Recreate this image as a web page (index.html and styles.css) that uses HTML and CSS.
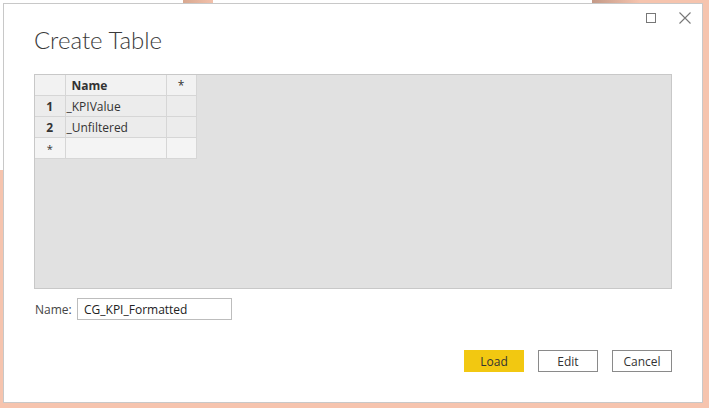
FILE: index.html
```html
<!DOCTYPE html>
<html lang="en">
  <head>
    <meta charset="UTF-8" />
    <title>Create Table</title>
    <link rel="stylesheet" href="styles.css">
  </head>
  <body>
    <div class="dialog">
      <div class="window-buttons">
        <svg width="11" height="11" viewBox="0 0 11 11"><rect x="0.5" y="0.5" width="9" height="9" fill="none" stroke="#777" stroke-width="1"/></svg>
        <svg width="12" height="12" viewBox="0 0 12 12"><path d="M0.5 0.5 L11.5 11.5 M11.5 0.5 L0.5 11.5" stroke="#777" stroke-width="1.1" fill="none"/></svg>
      </div>
      <h1 class="title">Create Table</h1>

      <div class="grid-area">
        <table class="grid">
          <colgroup>
            <col class="c-row" />
            <col class="c-name" />
            <col class="c-add" />
          </colgroup>
          <tr class="head">
            <td class="rowhead"></td>
            <td class="col-name">Name</td>
            <td class="col-add">*</td>
          </tr>
          <tr>
            <td class="rowhead">1</td>
            <td>_KPIValue</td>
            <td></td>
          </tr>
          <tr>
            <td class="rowhead">2</td>
            <td>_Unfiltered</td>
            <td></td>
          </tr>
          <tr class="new-row">
            <td class="rowhead star">*</td>
            <td></td>
            <td></td>
          </tr>
        </table>
      </div>

      <div class="name-row">
        <label for="tname">Name:</label>
        <input id="tname" type="text" value="CG_KPI_Formatted" />
      </div>

      <div class="actions">
        <button class="btn primary">Load</button>
        <button class="btn">Edit</button>
        <button class="btn">Cancel</button>
      </div>
    </div>
  </body>
</html>
```

FILE: styles.css
```css
html, body {
  height: 100%;
}

body {
  margin: 0;
  padding: 3px;
  box-sizing: border-box;
  font-family: "Segoe UI", "Open Sans", "Noto Sans", sans-serif;
  background-color: #f6c4ae;
  /* bits of the window behind the dialog */
  background-image:
    linear-gradient(to right, #fff 0, #fff 183px, #d8a890 183px, #f2c0aa 213px, #fff 213px, #fff 592px, #c49a88 592px, #f6c4ae 640px),
    linear-gradient(#fff, #fff);
  background-size: 100% 3px, 3px 170px;
  background-repeat: no-repeat;
  background-position: 0 0, 0 0;
}

.dialog {
  height: 400px;
  width: 700px;
  box-sizing: border-box;
  background: #fff;
  border: 1px solid #c8c8c8;
  padding: 0 30px 0 30px;
  position: relative;
  color: #333;
}

.window-buttons {
  position: absolute;
  top: 8px;
  right: 11px;
  display: flex;
  align-items: center;
  gap: 22px;
}

.title {
  margin: 0;
  padding-top: 20px;
  height: 70px;
  box-sizing: border-box;
  font-family: "Lato", "Open Sans", sans-serif;
  font-size: 24px;
  font-weight: 300;
  color: #3a3a3a;
  line-height: 32px;
}

.grid-area {
  height: 215px;
  box-sizing: border-box;
  background: #e1e1e1;
  border: 1px solid #c8c8c8;
}

.grid {
  border-collapse: collapse;
  table-layout: fixed;
  font-size: 12px;
  color: #333;
}

.grid .c-row {
  width: 30px;
}

.grid .c-name {
  width: 101px;
}

.grid .c-add {
  width: 30px;
}

.grid td {
  height: 20px;
  padding: 0 0 0 1px;
  border: 1px solid #d6d6d6;
  background: #ececec;
  line-height: 19px;
  white-space: nowrap;
}

.grid tr:first-child td {
  border-top: none;
}

.grid td:first-child {
  border-left: none;
}

.grid .head td {
  background: #f2f2f2;
}

.grid .col-name {
  font-weight: 700;
  padding-left: 6px;
}

.grid .col-add {
  text-align: center;
  padding: 0;
}

.grid td.rowhead {
  padding: 0;
  text-align: center;
  font-weight: 700;
}

.grid .new-row td {
  background: #f4f4f4;
}

.grid .rowhead.star {
  font-weight: 400;
  font-size: 11px;
}

.name-row {
  display: flex;
  align-items: center;
  margin-top: 9px;
  font-size: 12px;
}

.name-row label {
  width: 42px;
  padding-left: 1px;
  color: #444;
}

.name-row input {
  width: 155px;
  height: 22px;
  box-sizing: border-box;
  border: 1px solid #bdbdbd;
  padding: 0 6px;
  font-family: inherit;
  font-size: 12px;
  color: #222;
  outline: none;
}

.actions {
  display: flex;
  justify-content: flex-end;
  gap: 14px;
  margin-top: 30px;
}

.btn {
  width: 60px;
  height: 22px;
  box-sizing: border-box;
  border: 1px solid #8a8a8a;
  background: #fff;
  font-family: inherit;
  font-size: 12px;
  color: #333;
  padding: 0;
}

.btn.primary {
  background: #f2c811;
  border-color: #f2c811;
}
```
